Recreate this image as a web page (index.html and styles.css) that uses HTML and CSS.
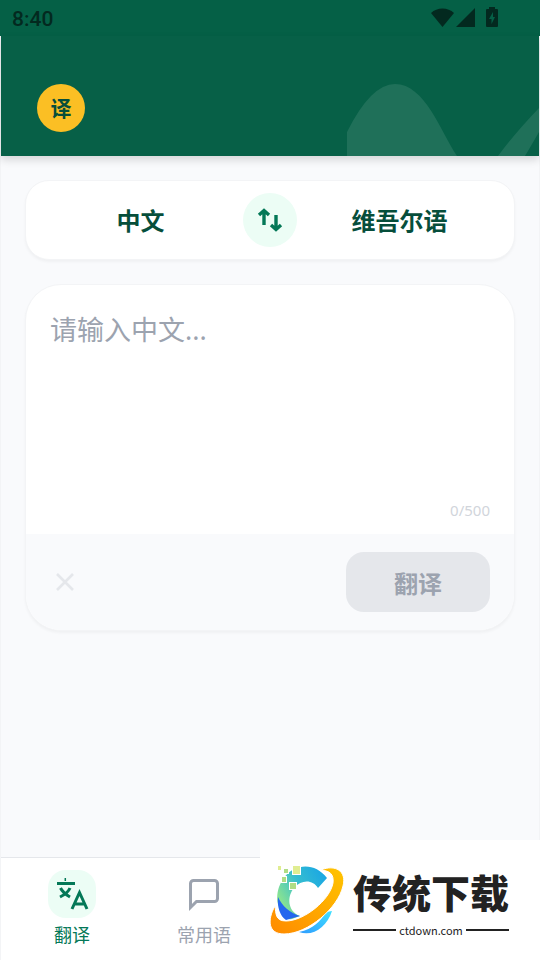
FILE: index.html
```html
<!DOCTYPE html>
<html lang="zh-CN">
<head>
<meta charset="utf-8">
<meta name="viewport" content="width=device-width, initial-scale=1">
<title>翻译</title>
<link rel="stylesheet" href="styles.css">
</head>
<body>
<div class="status">
  <span class="clock">8:40</span>
  <svg class="status-icons" width="68" height="22" viewBox="0 0 68 22" aria-hidden="true">
    <path d="M0 6C6 0 17 0 23 6L11.500 20Z"/>
    <path d="M25 20L44 1V20Z"/>
    <path fill-rule="evenodd" d="M58 0H64V2H66Q67 2 67 3V19Q67 20 66 20H56Q55 20 55 19V3Q55 2 56 2H58ZM62 5L58 12H60.500V17L64 10H62Z"/>
  </svg>
</div>
<div class="app">
  <header class="header">
    <span class="badge">译</span>
    <svg class="wave" width="192" height="72" viewBox="0 0 192 72" aria-hidden="true">
      <path d="M0 48Q24 0 48 0C78 0 94 48 110 72H0ZM151 72Q168 49 192 24V48Q184 62 178 72Z"/>
    </svg>
  </header>
  <main class="main">
    <section class="card languages">
      <button class="language" type="button">中文</button>
      <button class="swap" type="button" aria-label="切换语言">
        <svg width="26" height="24" viewBox="0 0 26 24" fill="none" stroke="currentColor" stroke-width="3.400" aria-hidden="true">
          <path d="M7 17V3M2 7L7 2.500L12 7M19 7V21M14 17L19 21.500L24 17"/>
        </svg>
      </button>
      <button class="language" type="button">维吾尔语</button>
    </section>
    <section class="card editor">
      <textarea class="source" maxlength="500" placeholder="请输入中文..." aria-label="原文"></textarea>
      <div class="count">0/500</div>
      <div class="actions">
        <button class="clear" type="button" aria-label="清空">
          <svg width="18" height="18" viewBox="0 0 18 18" fill="none" stroke="currentColor" stroke-width="2.600" aria-hidden="true"><path d="M1 1L17 17M17 1L1 17"/></svg>
        </button>
        <button class="translate" type="button" disabled>翻译</button>
      </div>
    </section>
  </main>
  <nav class="tabs">
    <a class="tab active" href="#translate">
      <span class="tab-icon">
        <svg width="34" height="34" viewBox="0 0 34 34" fill="none" stroke="currentColor" aria-hidden="true">
          <path d="M2 6.500H20" stroke-width="3"/><path d="M10.300 1V4" stroke-width="1.500"/>
          <path d="M5.500 11Q8 16 15 20M15 11Q13 16 5 20M17 32L24.500 15.500L32 32M19 27H30" stroke-width="3"/>
        </svg>
      </span>
      <span>翻译</span>
    </a>
    <a class="tab" href="#phrases">
      <span class="tab-icon">
        <svg width="36" height="36" viewBox="0 0 24 24" fill="none" stroke="currentColor" stroke-width="2" aria-hidden="true"><path d="M21 15a2 2 0 0 1-2 2H7l-4 4V5a2 2 0 0 1 2-2h14a2 2 0 0 1 2 2z"/></svg>
      </span>
      <span>常用语</span>
    </a>
  </nav>
</div>
<aside class="brand">
  <svg class="brand-mark" width="76" height="72" viewBox="0 0 76 72" aria-hidden="true">
    <defs>
      <linearGradient id="ring" x1="0" y1="0.600" x2="1" y2="0"><stop offset="0" stop-color="#8ee58d"/><stop offset=".45" stop-color="#35bdd0"/><stop offset="1" stop-color="#14a2e8"/></linearGradient>
      <linearGradient id="orbit" x1="1" y1="0" x2="0" y2="1"><stop offset="0" stop-color="#ffc400"/><stop offset="1" stop-color="#ff8a00"/></linearGradient>
      <linearGradient id="tail" x1="0" y1="1" x2="1" y2="0"><stop offset="0" stop-color="#2f9cff"/><stop offset="1" stop-color="#3fe0ff"/></linearGradient>
    </defs>
    <path fill="url(#ring)" d="M58 14C49 2 36 0 25 5C12 12 6 28 9 40C13 53 17 56 23 55L31 52C18 47 18 32 25 24C33 15 44 16 49 24Z"/>
    <path fill="#2467ee" d="M9 33C8 43 11 52 17 56L31 52C21 49 13 42 9 33Z"/>
    <path fill="url(#tail)" d="M63 47C58 63 44 73 30 68C44 65 52 57 57 48Z"/>
    <path fill="url(#orbit)" stroke="#fff" d="M52 6C66 0 78 7 74 22C69 44 39 70 15 70C-1 70-2 56 6 42C7 49 6 57 17 57C35 57 61 36 64 19C65 10 61 7 52 6Z"/>
    <g class="pixels"><path fill="#e0ed91" d="M24 2H31V10H24ZM9 2H12V6H9Z"/><path fill="#b0dd85" d="M15 5H19V9H15ZM13 13H17V18H13ZM21 19H27V25H21Z"/></g>
  </svg>
  <div class="brand-copy">
    <strong class="brand-name">传统下载</strong>
    <span class="brand-site">ctdown.com</span>
  </div>
</aside>
</body>
</html>
```
FILE: styles.css
```css
* { box-sizing: border-box; }
body {
  margin: 0;
  min-height: 100vh;
  display: flex;
  flex-direction: column;
  background: #f9fafc;
  color: #064e3b;
  font-family: "Noto Sans", "Noto Sans CJK SC", sans-serif;
}
button, textarea { font: inherit; border: 0; padding: 0; }
.status {
  height: 36px;
  padding: 0 41px 0 12px;
  display: flex;
  align-items: center;
  justify-content: space-between;
  background: #056046;
  color: #03291f;
}
.clock { padding-top: 2px; font: 500 21px/36px Roboto, sans-serif; }
.status-icons { fill: currentColor; }
.app {
  flex: 1;
  display: flex;
  flex-direction: column;
  border: solid #f3f4f6;
  border-width: 0 1px;
}
.header {
  position: relative;
  height: 120px;
  padding: 48px 36px 24px;
  background: #076047;
  box-shadow: 0 4px 8px rgba(0, 0, 0, .14);
}
.badge {
  width: 48px;
  height: 48px;
  display: grid;
  place-items: center;
  border-radius: 50%;
  background: #fbbf24;
  font-size: 21px;
  font-weight: 700;
  line-height: 30px;
}
.wave { position: absolute; right: 0; bottom: 0; fill: #1f7059; }
.main {
  flex: 1;
  display: flex;
  flex-direction: column;
  gap: 24px;
  padding: 24px;
}
.card {
  border: 1px solid #f3f4f6;
  background: #fff;
  box-shadow: 0 2px 3px rgba(0, 0, 0, .04);
}
.languages {
  display: grid;
  grid-template-columns: 1fr 54px 1fr;
  align-items: center;
  padding: 12px;
  border-radius: 24px;
}
.language {
  background: none;
  color: #064e3b;
  font-family: "Noto Sans CJK SC", sans-serif;
  font-size: 24px;
  font-weight: 700;
  line-height: 36px;
}
.swap {
  height: 54px;
  display: grid;
  place-items: center;
  border-radius: 50%;
  background: #ecfdf5;
  color: #047857;
}
.editor { overflow: hidden; border-radius: 36px; }
.source {
  display: block;
  width: 100%;
  height: 207px;
  padding: 24px;
  resize: none;
  outline: 0;
  background: none;
  font-size: 27px;
  line-height: 42px;
}
.source::placeholder { color: #9ca3af; opacity: 1; }
.count {
  height: 42px;
  padding: 0 24px;
  color: #d1d5db;
  font-size: 15px;
  line-height: 36px;
  text-align: right;
}
.actions {
  display: flex;
  align-items: center;
  justify-content: space-between;
  padding: 18px 24px;
  background: #f9fafc;
}
.clear {
  width: 30px;
  height: 36px;
  display: grid;
  place-items: center;
  background: none;
  color: #e5e7eb;
}
.translate {
  width: 144px;
  height: 60px;
  border-radius: 18px;
  background: #e5e7eb;
  color: #9ca3af;
  font-size: 24px;
  font-weight: 700;
}
.tabs {
  display: grid;
  grid-template-columns: repeat(4, 1fr);
  padding: 12px 5px;
  border-top: 1px solid #e5e7eb;
  background: #fff;
}
.tab {
  height: 78px;
  display: flex;
  flex-direction: column;
  align-items: center;
  gap: 4px;
  color: #9ca3af;
  font-size: 18px;
  line-height: 26px;
  text-decoration: none;
}
.tab-icon {
  width: 48px;
  height: 48px;
  display: grid;
  place-items: center;
  border-radius: 18px;
}
.active { color: #047857; }
.active .tab-icon { background: #ecfdf5; }
.brand {
  position: fixed;
  right: 0;
  bottom: 0;
  width: 280px;
  height: 120px;
  padding: 0 31px 0 9px;
  display: flex;
  align-items: center;
  justify-content: space-between;
  background: #fff;
  color: #222;
  font-family: "Noto Sans CJK SC", sans-serif;
}
.pixels { stroke: #fff; stroke-width: 2; paint-order: stroke; }
.brand-copy { width: 156px; }
.brand-name {
  display: block;
  font-size: 39px;
  font-weight: 900;
  line-height: 60px;
}
.brand-site {
  display: flex;
  align-items: center;
  gap: 3px;
  font-size: 11px;
  font-weight: 400;
  line-height: 18px;
}
.brand-site::before, .brand-site::after {
  content: "";
  flex: 1;
  height: 2px;
  background: #222;
}
```
